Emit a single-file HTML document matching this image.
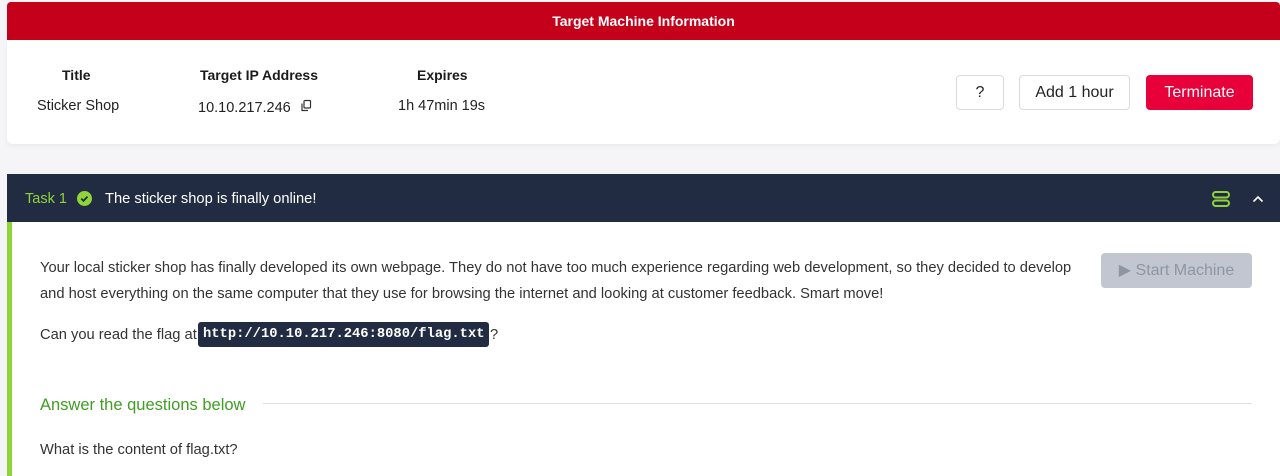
<!DOCTYPE html>
<html><head><style>
*{margin:0;padding:0;box-sizing:border-box}
body{width:1280px;height:476px;background:#f5f5f8;font-family:"Liberation Sans",sans-serif;color:#222;position:relative;overflow:hidden}
.abs{position:absolute;white-space:nowrap}
.red{left:7px;top:2px;width:1273px;height:38px;background:#c4001a;color:#fff;font-weight:bold;font-size:14px;text-align:center;line-height:38px;border-radius:4px 4px 0 0}
.card{left:7px;top:40px;width:1273px;height:104px;background:#fff;border-radius:0 0 6px 6px;box-shadow:0 2px 6px rgba(0,0,0,.05)}
.h{font-weight:bold;font-size:14px;color:#1b1b1b}
.v{font-size:14.5px;color:#222}
.btn{border:1px solid #d8dbe0;border-radius:4px;background:#fff;font-size:16px;color:#222;text-align:center;line-height:33px;height:35px}
.task{left:7px;top:174px;width:1273px;height:48px;background:#212c42}
.body{left:7px;top:222px;width:1273px;height:254px;background:#fff;border-left:5px solid #8fd53a}
.p{font-size:14.7px;color:#333}
</style></head><body>
<div class="abs red">Target Machine Information</div>
<div class="abs card"></div>
<div class="abs h" style="left:62px;top:67px">Title</div>
<div class="abs v" style="left:37px;top:98px">Sticker Shop</div>
<div class="abs h" style="left:200px;top:67px">Target IP Address</div>
<div class="abs v" style="left:198px;top:100px">10.10.217.246</div>
<svg class="abs" style="left:299px;top:99px" width="14" height="14" viewBox="0 0 14 14" fill="none" stroke="#333" stroke-width="1.2"><rect x="5" y="1.5" width="6.5" height="7.5" rx="1"/><path d="M3 4.5v7h6"/></svg>
<div class="abs h" style="left:417px;top:67px">Expires</div>
<div class="abs v" style="left:398px;top:98px">1h 47min 19s</div>
<div class="abs btn" style="left:956px;top:75px;width:48px">?</div>
<div class="abs btn" style="left:1019px;top:75px;width:111px">Add 1 hour</div>
<div class="abs btn" style="left:1146px;top:75px;width:107px;background:#e8003a;border-color:#e8003a;color:#fff">Terminate</div>
<div class="abs task"></div>
<div class="abs" style="left:25px;top:191px;font-size:14.5px;color:#8fd53a">Task 1</div>
<div class="abs" style="left:77px;top:191px;width:15px;height:15px;border-radius:50%;background:#8fd53a"></div>
<svg class="abs" style="left:77px;top:191px" width="15" height="15" viewBox="0 0 15 15"><path d="M4.3 7.6l2.2 2.2 4-4.2" stroke="#212c42" stroke-width="1.8" fill="none"/></svg>
<div class="abs" style="left:105px;top:191px;font-size:14.7px;color:#fff">The sticker shop is finally online!</div>
<svg class="abs" style="left:1212px;top:191px" width="18" height="16" viewBox="0 0 18 16" fill="none" stroke="#8fd53a" stroke-width="2"><rect x="1" y="1" width="16" height="5.5" rx="2.7"/><rect x="1" y="9.5" width="16" height="5.5" rx="2.7"/></svg>
<svg class="abs" style="left:1252px;top:195px" width="12" height="8" viewBox="0 0 12 8" fill="none" stroke="#fff" stroke-width="1.6"><path d="M1.5 6.5L6 2l4.5 4.5"/></svg>
<div class="abs body"></div>
<div class="abs p" style="left:40px;top:260px">Your local sticker shop has finally developed its own webpage. They do not have too much experience regarding web development, so they decided to develop</div>
<div class="abs p" style="left:40px;top:286px">and host everything on the same computer that they use for browsing the internet and looking at customer feedback. Smart move!</div>
<div class="abs p" style="left:40px;top:327px">Can you read the flag at</div>
<div class="abs" style="left:198px;top:322px;width:291px;height:25px;background:#212c42;border-radius:3px;color:#fff;font-family:'Liberation Mono',monospace;font-weight:bold;font-size:13.8px;line-height:25px;padding-left:5px">http://10.10.217.246:8080/flag.txt</div>
<div class="abs p" style="left:490px;top:327px">?</div>
<div class="abs" style="left:1101px;top:253px;width:151px;height:35px;background:#c1c6d0;border-radius:4px;color:#8e96a4;font-size:16px;line-height:35px;text-align:center">▶ Start Machine</div>
<div class="abs" style="left:40px;top:396px;font-size:16.5px;color:#3f9e23">Answer the questions below</div>
<div class="abs" style="left:263px;top:403px;width:989px;height:1px;background:#e0e0e0"></div>
<div class="abs p" style="left:40px;top:442px">What is the content of flag.txt?</div>
</body></html>
